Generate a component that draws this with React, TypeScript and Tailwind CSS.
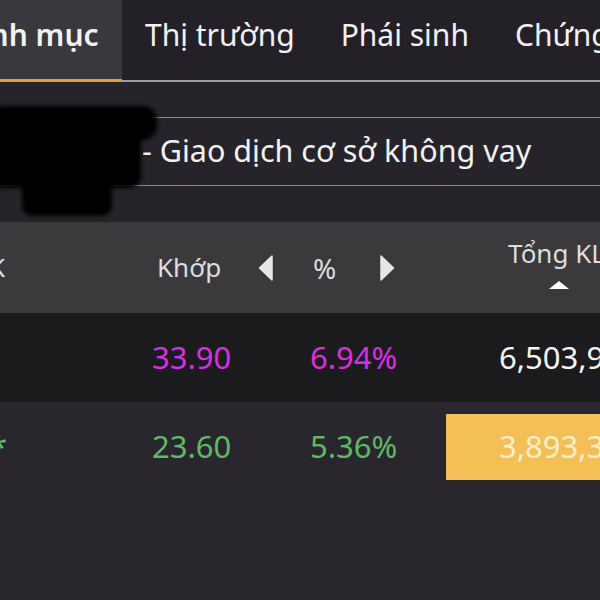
import React from "react";

const tabs = ["Thị trường", "Phái sinh", "Chứng khoán"];

const TriLeft = () => (
  <svg width="15" height="26" viewBox="0 0 15 26" className="block">
    <path d="M14 1 L14 25 L1.5 13 Z" fill="#e6e6e6" strokeLinejoin="round" stroke="#e6e6e6" strokeWidth="1.5" />
  </svg>
);

const TriRight = () => (
  <svg width="15" height="26" viewBox="0 0 15 26" className="block">
    <path d="M1 1 L1 25 L13.5 13 Z" fill="#e6e6e6" strokeLinejoin="round" stroke="#e6e6e6" strokeWidth="1.5" />
  </svg>
);

const TriUp = () => (
  <svg width="22" height="10" viewBox="0 0 22 10" className="block">
    <path d="M11 1 L21 9 L1 9 Z" fill="#ffffff" />
  </svg>
);

export default function App() {
  return (
    <div
      className="relative w-[600px] h-[600px] overflow-hidden bg-[#29272d] text-[#f2f2f2]"
      style={{ fontFamily: '"Noto Sans", "Open Sans", sans-serif' }}
    >
      {/* tabs */}
      <div className="flex h-[82px] bg-[#232127]">
        <div className="w-[122px] shrink-0 bg-[#39383d] border-b-[3px] border-[#e79c34] flex items-center overflow-hidden">
          <span className="ml-[-50px] text-[30px] font-semibold whitespace-nowrap leading-none pb-[10px]">Danh mục</span>
        </div>
        <div className="flex-1 flex border-b-2 border-[#9d9ca0] overflow-hidden">
          {tabs.map((t) => (
            <div key={t} className="px-[23px] flex items-center text-[30px] whitespace-nowrap leading-none pb-[10px]">
              {t}
            </div>
          ))}
        </div>
      </div>

      {/* account row */}
      <div className="bg-[#26242a] pt-[35px] pb-[36px]">
        <div className="h-[69px] border-y border-[#8e8d92] flex items-center pl-[142px]">
          <span className="text-[30.5px] leading-none whitespace-nowrap pb-[2px]">- Giao dịch cơ sở không vay</span>
        </div>
      </div>

      {/* header */}
      <div className="flex items-center h-[91px] bg-[#3a393c] text-[26px] text-[#dedede] whitespace-nowrap">
        <div className="w-[157px] shrink-0">
          <span className="ml-[-11px]">K</span>
        </div>
        <span className="w-[101px] shrink-0">Khớp</span>
        <div className="w-[55px] shrink-0"><TriLeft /></div>
        <span className="w-[67px] shrink-0 text-[28px]">%</span>
        <div className="w-[128px] shrink-0"><TriRight /></div>
        <div className="flex flex-col items-start -mt-[6px]">
          <span className="text-[26px] leading-none">Tổng KL</span>
          <div className="ml-[40px] mt-[14px]"><TriUp /></div>
        </div>
      </div>

      {/* row 1 */}
      <div className="flex items-center h-[89px] bg-[#1b1a1d] text-[31px] whitespace-nowrap">
        <span className="w-[152px] shrink-0"></span>
        <span className="w-[158px] shrink-0 text-[#d92fe3]">33.90</span>
        <span className="w-[189px] shrink-0 text-[#d92fe3]">6.94%</span>
        <span className="text-[#f4f4f4]">6,503,960</span>
      </div>

      {/* row 2 */}
      <div className="flex items-center h-[89px] text-[31px] whitespace-nowrap">
        <div className="w-[152px] shrink-0">
          <span className="ml-[-10px] text-[#5dbb63]">*</span>
        </div>
        <span className="w-[158px] shrink-0 text-[#5dbb63]">23.60</span>
        <span className="w-[136px] shrink-0 text-[#5dbb63]">5.36%</span>
        <div className="flex-1 h-[66px] bg-[#f4bf55] flex items-center pl-[53px] text-[#fdf1c9]">
          3,893,300
        </div>
      </div>

      {/* redaction blot */}
      <div className="absolute left-[-10px] top-[106px] w-[167px] h-[34px] bg-black rounded-[14px] blur-[2px]" />
      <div className="absolute left-[-10px] top-[124px] w-[151px] h-[64px] bg-black rounded-[12px] blur-[2px]" />
      <div className="absolute left-[22px] top-[170px] w-[90px] h-[46px] bg-black rounded-[10px] blur-[2px]" />
    </div>
  );
}
